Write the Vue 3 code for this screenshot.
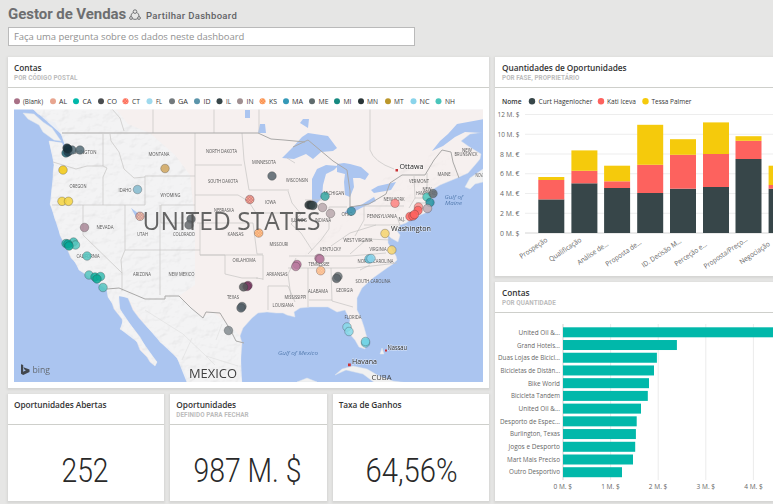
<script setup>
const legend = [
  ['(Blank)', 17, '#a87086', 23, 20], ['AL', 53, '#e8a58f', 59, 8], ['CA', 76, '#01b8aa', 82.5, 9],
  ['CO', 101, '#4a4d4f', 107, 10], ['CT', 125.5, '#fd625e', 132, 8, 'plaid'], ['FL', 149.5, '#9fd9ed', 156, 6],
  ['GA', 172, '#72797d', 178, 10], ['ID', 197, '#5b94aa', 203.5, 7], ['IL', 219.5, '#374649', 226, 5],
  ['IN', 240, '#a08f91', 246.5, 7], ['KS', 262.5, '#fb8b50', 269, 8, 'plaid'], ['MA', 286, '#3599b8', 292, 11],
  ['ME', 312, '#5f6b6d', 318.5, 10], ['MI', 337, '#168980', 343.5, 8], ['MN', 361, '#293537', 367, 11],
  ['MT', 388, '#bb972b', 394, 9.5], ['NC', 413.5, '#8ad4eb', 419.5, 10], ['NH', 438.5, '#4ac5bb', 445, 10],
]

const states = [
  ['ASHINGTON', 84, 154, 25], ['OREGON', 78, 188, 17], ['MONTANA', 159, 155.5, 21], ['IDAHO', 125, 191.5, 13],
  ['WYOMING', 170.5, 196.5, 20], ['NORTH DAKOTA', 221.5, 153, 31], ['SOUTH DAKOTA', 223, 183, 30],
  ['NEBRASKA', 224, 211.5, 20], ['NEVADA', 105, 229, 17], ['UTAH', 142.5, 235.5, 11], ['COLORADO', 184, 235.5, 22],
  ['KANSAS', 235.5, 235.5, 16], ['CALIFORNIA', 88, 258, 23], ['ARIZONA', 142, 275.5, 18], ['NEW MEXICO', 181.5, 275.5, 26],
  ['OKLAHOMA', 244, 261.5, 23], ['TEXAS', 233, 299, 12], ['MINNESOTA', 264, 164, 24], ['WISCONSIN', 297, 181.5, 22],
  ['IOWA', 270.5, 204, 11], ['MICHIGAN', 334, 194.5, 21], ['ILLINOIS', 299, 221.5, 16], ['INDIANA', 323, 221.5, 16],
  ['OHIO', 347, 216, 11], ['PENNSYLVANIA', 382, 218, 30], ['NEW YORK', 394, 200.5, 21], ['VERMONT', 419, 183, 20],
  ['NEW', 427, 190.5, 9], ['HAMPSHIRE', 426, 195, 20], ['MAINE', 444, 175.5, 13], ['NEW', 467, 151.5, 10],
  ['BRUNSWICK', 466, 156, 23], ['NOVA', 480, 176.5, 9], ['WEST VIRGINIA', 358, 241.5, 29], ['MISSOURI', 279, 245.5, 19],
  ['KENTUCKY', 330.5, 250.5, 21], ['VIRGINIA', 378, 250.5, 17], ['NORTH CAROLINA', 375.5, 263, 36],
  ['TENNESSEE', 319, 265.5, 21], ['ARKANSAS', 277, 275.5, 21], ['SOUTH CAROLINA', 373, 283, 35],
  ['ALABAMA', 318, 293, 20], ['GEORGIA', 344.5, 291.5, 17], ['MISSISSIPPI', 295.5, 299, 22],
  ['LOUISIANA', 283, 306.5, 21], ['FLORIDA', 353, 319, 17], ['N.J.', 402, 220.5, 7],
]

const dots = [
  [66, 153, '#1c6070'], [68, 152, '#203f50'], [72, 150, '#526b77'], [67, 148, '#17313c'], [68, 149, '#17313c'], [80, 150, '#536b75'],
  [63, 170, '#f2c80f'], [62, 201.3, '#f5d33f'], [68.5, 201.3, '#f5d33f'], [165, 168.5, '#cfa45d'], [137.5, 189.5, '#82b9cc'],
  [140, 216.3, '#cb8b91', 'plaid'], [84.5, 227.5, '#a88797'], [191, 219, '#5a6266'], [189, 225, '#65696c'],
  [66, 243.5, '#20a99f'], [73.5, 242, '#3eb9b2'], [75.5, 245, '#57c5bd'], [68, 244, '#05a797'], [69, 246, '#05a797'],
  [87, 256, '#54c4be'], [89, 275, '#54c4be'], [95, 277, '#10ae9e'], [100.5, 276.5, '#35bbb0'], [97, 279, '#08a894'], [103, 287.5, '#54c4be'],
  [272, 176, '#56636b'], [249.8, 199.5, '#d3656f', 'plaid'], [258.7, 233, '#f49a62', 'plaid'],
  [309, 205, '#293537'], [311, 205, '#293537'], [313, 205.5, '#374649'], [325, 196.3, '#34a6a1'],
  [322.5, 207.5, '#b9a8ad'], [330.5, 213.5, '#b9a8ad'], [351.3, 211.2, '#3c91a7'], [395, 203.3, '#fd8380'],
  [427, 197, '#4ac5bb'], [433, 193.5, '#666d70'], [430, 202.5, '#21919f'], [427.5, 208.5, '#bca8b1'],
  [418.5, 207, '#fa8e8b'], [418, 210.5, '#fd625e'], [410, 216.5, '#fd625e'], [413, 216, '#fd625e'], [414.5, 214.5, '#fd625e'],
  [385, 233.5, '#f4d36d'], [391.8, 250, '#f4d36d'], [369, 259, '#62c4df'], [371, 258.5, '#8ad4eb'],
  [297, 264.5, '#b66d98'], [295.8, 266.5, '#b87b9f'], [319, 258.3, '#b87b9f'], [320, 259, '#b87b9f'],
  [320.7, 270.7, '#f9ae85', 'plaid'], [338, 276.5, '#6b7478'], [336.5, 278.5, '#596267'],
  [248, 285.5, '#7c3c65'], [247, 286.5, '#7c3c65'], [243.5, 287, '#55585b'], [242, 306.5, '#536069'], [241, 308, '#536069'], [228.5, 330.5, '#838b8f'],
  [347, 327, '#86d8e8'], [349, 331.5, '#86d8e8'], [365.5, 343, '#72d3e4'], [365.5, 341.5, '#72d3e4'],
]

const baseline = 233
const people = [['Curt Hagenlocher', 532, '#374649', 538.5, 54], ['Kati Iceva', 601, '#fd625e', 607, 29], ['Tessa Palmer', 645.5, '#f5ca0c', 651.5, 40]]
const ticks = ['0 M. $', '2 M. €', '4 M. €', '6 M. €', '8 M. €', '10 M. $', '12 M. $'].map((t, i) => ({ t, y: baseline - i * 19.75 }))
const columns = [
  { x: 538.3, tops: [199.4, 180, 177], label: 'Prospeção', end: [548, 241], w: 32 },
  { x: 571.4, tops: [183.3, 170.8, 150.4], label: 'Qualificação', end: [582, 241], w: 37.5 },
  { x: 604.1, tops: [188, 181.3, 165.7], label: 'Análise de...', end: [609, 245], w: 36 },
  { x: 637.2, tops: [193, 164.8, 124.8], label: 'Proposta de...', end: [642, 243.5], w: 41.5 },
  { x: 670, tops: [188.7, 154.8, 139.2], label: 'ID. Decisão M...', end: [682, 242], w: 46 },
  { x: 703, tops: [187, 154, 122.4], label: 'Perceção e...', end: [707.5, 245.5], w: 37.5 },
  { x: 735.5, tops: [159, 140.8, 136.2], label: 'Proposta/Preço...', end: [748, 240.5], w: 51 },
  { x: 768.6, tops: [188.7, 185, 165.7], label: 'Negociação', end: [770.5, 245], w: 35 },
]
const shades = ['#374649', '#fd625e', '#f5ca0c']
const segments = c => c.tops.map((y, i) => ({ y, h: (i ? c.tops[i - 1] : baseline) - y, fill: shades[i] }))

const accounts = [
  ['United Oil &...', 215, 41.5], ['Grand Hotels...', 113.9, 43], ['Duas Lojas de Bicicl...', 93.9, 62], ['Bicicletas de Distân...', 91, 59.5],
  ['Bike World', 86, 32], ['Bicicleta Tandem', 84.8, 49], ['United Oil &...', 78, 41.5], ['Desporto de Espec...', 73.7, 60],
  ['Burlington, Texas', 72.9, 50], ['Jogos e Desporto', 72.2, 51.5], ['Mart Mais Preciso', 70, 53], ['Outro Desportivo', 59, 51],
]

const kpis = [
  { title: 'Oportunidades Abertas', value: '252', x: 53.5, w: 47 },
  { title: 'Oportunidades', sub: 'DEFINIDO PARA FECHAR', value: '987 M. $', x: 23.5, w: 108 },
  { title: 'Taxa de Ganhos', value: '64,56%', x: 32.5, w: 92 },
]
</script>

<template>
  <main class="dashboard">
    <header>
      <div class="heading">
        <h1>Gestor de Vendas</h1>
        <svg class="share" width="12" height="12" viewBox="0 0 12 12">
          <path d="M4.200 3.300Q2 4.700 1.800 7.700M7.800 3.300Q10 4.700 10.200 7.700M3.300 9.800Q6 11 8.700 9.800" />
          <circle cx="6" cy="2.600" r="1.800" /><circle cx="2" cy="9" r="1.400" /><circle cx="10" cy="9" r="1.400" />
        </svg>
        <span class="share-label">Partilhar Dashboard</span>
      </div>
      <input class="question" placeholder="Faça uma pergunta sobre os dados neste dashboard" />
    </header>

    <div class="board">
      <div class="column">
        <section class="card map-card">
          <div class="card-head"><h2>Contas</h2><p>POR CÓDIGO POSTAL</p></div>
          <svg class="plot" width="481" height="299" viewBox="8 88 481 299">
            <defs>
              <clipPath id="frame"><rect x="14" y="109.500" width="469" height="272.500" /></clipPath>
              <filter id="relief" x="0" y="0" width="100%" height="100%">
                <feTurbulence type="fractalNoise" baseFrequency="0.09 0.12" numOctaves="4" seed="8" />
                <feDiffuseLighting lighting-color="#ffffff" surfaceScale="2" diffuseConstant="1.150">
                  <feDistantLight azimuth="225" elevation="58" />
                </feDiffuseLighting>
                <feComposite in2="SourceGraphic" operator="in" />
              </filter>
              <pattern id="plaid" width="3" height="3" patternUnits="userSpaceOnUse">
                <path d="M0 0h1.300v1.300h-1.300zM1.500 1.500h1.300v1.300h-1.300z" fill="#ffdf9b" fill-opacity=".65" />
              </pattern>
            </defs>
            <g v-for="[name, cx, fill, x, w, plaid] in legend" :key="name">
              <circle :cx="cx" cy="101.300" r="3" :fill="fill" />
              <circle v-if="plaid" :cx="cx" cy="101.300" r="2.800" fill="url(#plaid)" />
              <text class="legend" :x="x" y="104" :textLength="w" lengthAdjust="spacingAndGlyphs">{{ name }}</text>
            </g>
            <g clip-path="url(#frame)">
              <rect x="14" y="109" width="469" height="274" fill="#abc5f0" />
              <path class="land" d="M33 109L38 114 45 117 48 121 55 122 58 128 61 134 64 139 67 143 66 148 64 149 62 143 56 142 49 141 51 149 53 157 54 165 53 174 54 181 52 190 52 199 50 204 53 210 55 219 59 226 60 235 65 245 68 251 71 258 77 264 79 270 85 273 92 275 97 279 102 284 107 290 108 297 112 303 114 309 122 319 123 325 120 329 126 332 132 335 137 342 140 350 147 357 150 362 155 366 157 362 152 356 147 350 140 337 133 328 128 322 123 316 120 309 118 300 119 296 123 296 128 298 133 310 139 318 147 327 157 336 160 342 169 348 177 358 182 366 187 377 187 383H242L240 371 241 356 242 343 240 336 243 328 252 318 258 313 267 312 276 313 283 313 287 315 295 317 294 312 300 308 310 307 320 307 328 307 337 312 345 310 350 320 348 332 355 340 359 347 365 349 367 338 364 327 361 318 357 310 357 298 362 288 373 278 387 268 393 264 397 260 396 256 391 248 388 243 388 235 391 238 398 242 400 235 397 231 400 225 406 223 410 220 418 216 425 213 431 210 432 203 432 190 440 185 457 178 468 173 475 165 480 159 481 154 468 146 461 141 470 134 484 132V109Z" />
              <path class="west" d="M33 109L61 134 66 149 64 149 62 143 49 141 54 165 50 204 60 235 79 270 107 290 108 297 123 320 120 329 137 342 155 366 157 362 133 328 120 309 119 296 128 298 147 327 160 342 177 358 187 383H242L240 336 231 326 213 312 202 317 179 296 195 285 195 220 190 175 175 155 150 133 128 124 116 109Z" />
              <path class="relief" filter="url(#relief)" d="M33 109L61 134 66 149 64 149 62 143 49 141 54 165 50 204 60 235 79 270 107 290 108 297 123 320 120 329 137 342 155 366 157 362 133 328 120 309 119 296 128 298 147 327 160 342 177 358 187 383H242L240 336 231 326 213 312 202 317 179 296 195 285 195 220 190 175 175 155 150 133 128 124 116 109Z" />
              <path class="relief east" filter="url(#relief)" d="M288 258L323 235 353 218 397 213 429 194 465 176 440 147 419 162 384 178 365 205 348 216 326 255Z" />
              <path class="land gray" d="M23 113L34 114 43 122 52 128 61 141 54 140 43 132 39 125 28 119ZM465 187L470 178 483 169V182L475 184 470 189ZM335 375L342 369 353 366 367 369 379 376 393 381 408 383H375L363 374 346 370ZM297 382L307 378 317 382ZM380 354L382 348 384 354Z" />
              <path class="lake" d="M484 119L457 124 448 134 440 141 432 151 443 146 455 137 465 132 484 133ZM282 158L292 148 302 137 308 133 328 136 337 148 333 151 321 152 313 159 306 154 294 159ZM312 200L312 179 317 169 326 165 338 166 334 170 326 174 323 185 322 198 315 205ZM337 164L344 163 350 164 361 167 369 174 365 180 360 178 353 178 354 187 350 197 345 195 344 182 345 174 337 172ZM344 213L350 207 361 205 374 197 376 201 361 208 352 213ZM371 190L378 186 396 182 391 190 374 193ZM300 123L303 119 309 119 308 128ZM245 110H250L250 118H245ZM260 124L265 124 266 133H258ZM131 208L139 214 137 219ZM469 145L484 140V152L478 147Z" />
              <path class="border minor" d="M112 109L120 118 124 131M153 109V133M214 109V133M259 109V133M370 109V150Q374 162 394 169M103 134V166L107 168 103 177V205M103 166H87L76 169 53 162M52 205H145M83 205V235L122 273 122 291M125 205V250L121 260 122 273M125 250H160V205M145 205V176H195V133M195 176V223H161V205H195M195 165H242M195 195H238L248 201M200 223V250H160V295M197 223H253M200 250V255H225V274L242 278 258 278M263 280V255H200M256 278L263 279M242 133L244 160 249 190H289M249 202 256 213H288M253 223 257 254H263M287 158 295 163M288 191 292 203 301 214 291 224 301 233 312 250M305 200H322M329 207V229L321 240 308 254M329 207H347M364 206H404M364 206V220L355 236M364 225H400L397 217M289 256H350L386 253M288 268H355L397 263M308 268V307M331 268 332 301 353 307M309 300H332M268 286H288L295 302M268 286V310M296 258 288 274 291 297M360 270 370 265M331 246 350 233 376 225M350 254 367 239 391 240M414 176 415 198 409 208M427 173V194M415 198H431M425 203H416M110 134 111 141 119 152 124 169 134 178 145 177" />
              <path class="border" d="M62 133H258L271 139 284 140 305 142M350 207V191L347 170 333 161 308 140 293 147M350 207 369 204 386 194 390 183 402 175H425L434 160 442 150 451 152 453 162 459 178M107 289 119 288 145 299H165V296H179L191 308 203 318 206 312 220 313 231 331 236 341 244 343" />
              <path class="border faint" d="M145 310L183 334 206 356 238 366M192 338 182 360M222 324 216 340M206 356 215 365" />
              <text v-for="([name, x, y, w], i) in states" :key="i" class="state" :x="x" :y="y" :textLength="w" lengthAdjust="spacingAndGlyphs">{{ name }}</text>
              <g v-for="([x, y, fill, plaid], i) in dots" :key="'d' + i">
                <circle :cx="x" :cy="y" r="4.300" :fill="fill" fill-opacity=".85" class="dot" />
                <circle v-if="plaid" :cx="x" :cy="y" r="3.900" fill="url(#plaid)" />
              </g>
              <text class="country" x="142.500" y="230" textLength="178" lengthAdjust="spacingAndGlyphs">UNITED STATES</text>
              <text class="mexico" x="189" y="377.500" textLength="48" lengthAdjust="spacingAndGlyphs">MEXICO</text>
              <text class="cuba" x="371.500" y="379.500" textLength="20" lengthAdjust="spacingAndGlyphs">CUBA</text>
              <text class="city" x="399.500" y="168.500" textLength="24" lengthAdjust="spacingAndGlyphs">Ottawa</text>
              <text class="city" x="391" y="231" textLength="40" lengthAdjust="spacingAndGlyphs">Washington</text>
              <text class="city" x="352" y="363.500" textLength="25" lengthAdjust="spacingAndGlyphs">Havana</text>
              <text class="city small" x="387.500" y="349.500" textLength="19.500" lengthAdjust="spacingAndGlyphs">Nassau</text>
              <text class="sea" x="278" y="354.500" textLength="40" lengthAdjust="spacingAndGlyphs">Gulf of Mexico</text>
              <text class="sea" x="444.500" y="198.500" textLength="18.500" lengthAdjust="spacingAndGlyphs">Gulf of</text>
              <text class="sea" x="445" y="204.500" textLength="17" lengthAdjust="spacingAndGlyphs">Maine</text>
              <path d="M395.500 169h2.500v2.500h-2.500zM348 363.500h2.800v2.800h-2.800zM385 349.500h2v2h-2z" fill="#c83437" />
              <path d="M21 364.300l2.200.8v6.600l2.700-1.400-1.500-.7-1-2.300 6.100 2.100v2.500L23.200 375 21 373.700z" fill="#42474d" />
              <text class="bing" x="32.500" y="373" textLength="17.500" lengthAdjust="spacingAndGlyphs">bing</text>
            </g>
          </svg>
        </section>

        <div class="kpis">
          <section v-for="k in kpis" :key="k.title" class="card kpi">
            <div class="card-head"><h2>{{ k.title }}</h2><p v-if="k.sub">{{ k.sub }}</p></div>
            <svg class="plot" width="156" height="75" viewBox="0 0 156 75">
              <text class="figure" :x="k.x" y="57" :textLength="k.w" lengthAdjust="spacingAndGlyphs">{{ k.value }}</text>
            </svg>
          </section>
        </div>
      </div>

      <div class="column">
        <section class="card stages">
          <div class="card-head"><h2>Quantidades de Oportunidades</h2><p>POR FASE, PROPRIETÁRIO</p></div>
          <svg class="plot" width="278" height="187" viewBox="495 88 278 187">
            <text class="legend strong" x="502" y="104" textLength="19.500" lengthAdjust="spacingAndGlyphs">Nome</text>
            <g v-for="[name, cx, fill, x, w] in people" :key="name">
              <circle :cx="cx" cy="101.200" r="3.200" :fill="fill" />
              <text class="legend" :x="x" y="104" :textLength="w" lengthAdjust="spacingAndGlyphs">{{ name }}</text>
            </g>
            <g v-for="(k, i) in ticks" :key="k.t">
              <path :d="`M525 ${k.y}H773`" :stroke="i ? '#ededed' : '#d4d4d4'" />
              <text class="axis" x="519.500" :y="k.y + 2.500" text-anchor="end" :textLength="i > 4 ? 22 : 19.500" lengthAdjust="spacingAndGlyphs">{{ k.t }}</text>
            </g>
            <g v-for="c in columns" :key="c.label">
              <rect v-for="s in segments(c)" :key="s.fill" :x="c.x" :y="s.y" width="26" :height="s.h" :fill="s.fill" />
              <text class="axis" text-anchor="end" :textLength="c.w" lengthAdjust="spacingAndGlyphs" :transform="`translate(${c.end}) rotate(-34)`">{{ c.label }}</text>
            </g>
          </svg>
        </section>

        <section class="card accounts">
          <div class="card-head"><h2>Contas</h2><p>POR QUANTIDADE</p></div>
          <svg class="plot" width="278" height="188" viewBox="495 313 278 188">
            <g v-for="i in 5" :key="i">
              <path :d="`M${515.400 + i * 47.600} 324V480`" :stroke="i === 1 ? '#d0d0d0' : '#ebebeb'" />
              <text class="axis" :x="515 + i * 47.700" y="489" text-anchor="middle" textLength="18.500" lengthAdjust="spacingAndGlyphs">{{ i - 1 }} M. $</text>
            </g>
            <g v-for="([name, width, textWidth], i) in accounts" :key="i">
              <rect x="563" :y="327.300 + i * 12.720" :width="width" height="10" fill="#01b8aa" />
              <text class="axis" x="560" :y="335 + i * 12.660" text-anchor="end" :textLength="textWidth" lengthAdjust="spacingAndGlyphs">{{ name }}</text>
            </g>
          </svg>
        </section>
      </div>
    </div>
  </main>
</template>

<style>
body { background: #e6e6e5; overflow: hidden; }
</style>

<style scoped>
.dashboard { width: 773px; height: 504px; overflow: hidden; background: #e6e6e5; font-family: "Open Sans", "Noto Sans", sans-serif; }
header { height: 57px; box-sizing: border-box; padding: 5px 8px 0; }
.heading { display: flex; align-items: center; height: 19px; }
h1, h2, p { margin: 0; }
h1 { width: 118px; margin-right: 3px; font: 700 15px/19px Roboto, sans-serif; letter-spacing: -.05px; color: #6d6e70; white-space: nowrap; }
.share { flex: none; margin-right: 5px; fill: none; stroke: #737476; stroke-width: 1; }
.share-label { padding-top: 2px; font: 500 9.500px/16px Roboto, sans-serif; letter-spacing: .33px; color: #626366; white-space: nowrap; }
.question { display: block; box-sizing: border-box; width: 407px; height: 19px; margin-top: 3px; padding: 0 5px; border: 1px solid #bababa; border-radius: 0; outline: none; background: #fff; font: 9.500px/17px "Open Sans", sans-serif; letter-spacing: -.05px; }
.question::placeholder { color: #919191; opacity: 1; }
.board { display: grid; grid-template-columns: 481px 278px; gap: 6px; padding-left: 8px; }
.column { display: flex; flex-direction: column; gap: 6px; }
.card { background: #fff; box-shadow: 0 1px 2px 1px #d5d5d3; overflow: hidden; }
.map-card { height: 331px; }
.kpis { display: grid; grid-template-columns: repeat(3, 1fr); gap: 6px; }
.kpi { height: 107px; }
.stages { height: 219px; }
.accounts { height: 219px; }
.card-head { box-sizing: border-box; height: 31px; padding: 5px 6px 0; border-bottom: 1px solid #cecfcb; }
.stages .card-head, .accounts .card-head { padding-left: 7px; }
h2 { font: 600 8.300px/12px "Open Sans", sans-serif; letter-spacing: -.06px; color: #333; white-space: nowrap; }
.card-head p { font: 700 6.300px/9px Roboto, sans-serif; letter-spacing: .08px; color: #bcbcbc; white-space: nowrap; }
.plot { display: block; }
text { font-family: "Open Sans", sans-serif; }
.legend { font-size: 7px; fill: #333; }
.strong { font-weight: 600; }
.axis { font-size: 7px; fill: #666; }
.land { fill: #f6f0ef; stroke: #dfe5ed; stroke-width: .5; }
.gray { fill: #f1f1f1; }
.west { fill: #f3f3f4; fill-opacity: .9; }
.relief { fill: #fff; opacity: .2; mix-blend-mode: multiply; }
.east { opacity: .12; }
.lake { fill: #abc5f0; }
.border { fill: none; stroke: #aaa9a8; stroke-width: 1; stroke-linejoin: round; }
.minor { stroke: #c6c4c3; stroke-width: .7; }
.faint { stroke: #dedede; stroke-width: .6; }
.state { font-size: 4.700px; fill: #555; text-anchor: middle; }
.dot { stroke: #2b2b2b; stroke-opacity: .4; stroke-width: .7; }
.country { font-size: 25px; fill: #505050; fill-opacity: .88; }
.mexico { font-size: 13.500px; fill: #414141; }
.cuba { font-size: 7.500px; fill: #404040; }
.city { font-size: 7.500px; fill: #222; stroke: #fff; stroke-opacity: .6; stroke-width: 1px; paint-order: stroke; }
.small { font-size: 6.500px; }
.sea { font-size: 6px; font-style: italic; fill: #547cb0; }
.bing { font-size: 8.500px; fill: #656b72; }
.figure { font: 300 34px Roboto, sans-serif; fill: #292929; }
</style>
